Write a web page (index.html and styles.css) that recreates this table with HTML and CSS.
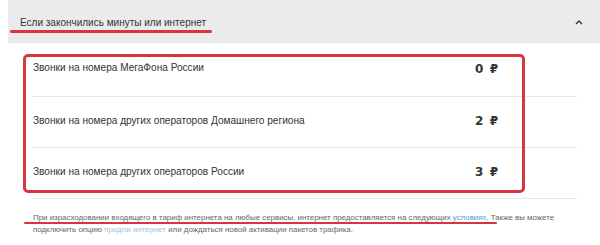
FILE: index.html
```html
<!DOCTYPE html>
<html lang="ru">
<head>
<meta charset="utf-8">
<link rel="stylesheet" href="styles.css">
</head>
<body>
<div class="page">
  <div class="acc-head">
    <span class="acc-title">Если закончились минуты или интернет</span>
    <svg class="chev" width="8" height="6" viewBox="0 0 8 6"><path d="M1 5 L4 2 L7 5" fill="none" stroke="#333" stroke-width="1.4"/></svg>
  </div>
  <div class="rows">
    <div class="row"><span class="label">Звонки на номера МегаФона России</span><span class="price">0 ₽</span></div>
    <div class="row"><span class="label">Звонки на номера других операторов Домашнего региона</span><span class="price">2 ₽</span></div>
    <div class="row"><span class="label">Звонки на номера других операторов России</span><span class="price">3 ₽</span></div>
  </div>
  <div class="note">
    <div class="note-line">При израсходовании входящего в тариф интернета на любые сервисы, интернет предоставляется на следующих <a class="link">условиях</a>. Также вы можете</div>
    <div class="note-line">подключить опцию <a class="link light">продли интернет</a> или дождаться новой активации пакетов трафика.</div>
  </div>

  <div class="mark mark-head"></div>
  <div class="mark-box"></div>
  <div class="mark mark-note"></div>
</div>
</body>
</html>
```
FILE: styles.css
```css
html, body {
  margin: 0;
  padding: 0;
  background: #fff;
}
body {
  font-family: "Liberation Sans", Arial, sans-serif;
  color: #333;
}
.page {
  position: relative;
  width: 600px;
  height: 245px;
  overflow: hidden;
}
.acc-head {
  margin-left: 8px;
  height: 43px;
  background: #ebebeb;
  border-bottom: 1px solid #e2e2e2;
  display: flex;
  align-items: center;
  justify-content: space-between;
  padding: 0 17px 0 12px;
  box-sizing: border-box;
}
.acc-title {
  font-size: 10px;
  color: #333;
  padding-top: 3px;
}
.chev {
  display: block;
  margin-top: 2px;
}
.rows {
  margin: 1px 23px 0 32px;
}
.row {
  height: 51px;
  border-bottom: 1px solid #e6e6e6;
  display: flex;
  align-items: center;
  justify-content: space-between;
  padding: 0 79px 3px 1px;
  box-sizing: border-box;
}
.row:first-child {
  height: 53px;
  align-items: flex-start;
  padding-top: 18px;
}
.label {
  font-size: 10.1px;
  color: #333;
}
.price {
  font-family: "DejaVu Sans", sans-serif;
  font-size: 12px;
  font-weight: 600;
  letter-spacing: 1px;
  margin-right: -1px;
  color: #333;
}
.note {
  margin: 13px 30px 0 33px;
  font-size: 7.9px;
  color: #666;
}
.note-line {
  height: 11.5px;
  line-height: 11.5px;
  white-space: nowrap;
}
.link {
  color: #4aa3d6;
}
.link.light {
  color: #9dc6e0;
}
.mark {
  position: absolute;
  height: 3px;
  border-radius: 2px;
  background: #d5363f;
}
.mark-head {
  left: 10px;
  top: 30px;
  width: 202px;
}
.mark-box {
  position: absolute;
  left: 23px;
  top: 54px;
  width: 502px;
  height: 139px;
  box-sizing: border-box;
  border: 3px solid #d5363f;
  border-radius: 5px;
}
.mark-note {
  left: 24px;
  top: 222px;
  width: 473px;
  height: 2px;
}
```
